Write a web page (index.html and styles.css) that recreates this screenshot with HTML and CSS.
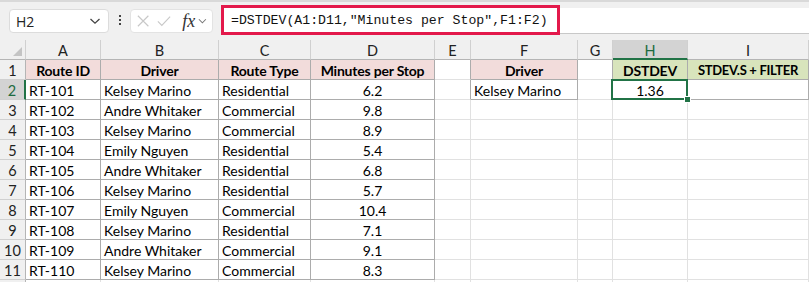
FILE: index.html
```html
<!DOCTYPE html>
<html lang="en">
<head>
  <meta charset="UTF-8">
  <title>DSTDEV</title>
  <link rel="stylesheet" href="styles.css">
</head>
<body>
  <div class="toolbar">
    <div class="namebox">
      <span>H2</span>
      <svg class="chev" width="12" height="8" viewBox="0 0 12 8"><path d="M1.5 2 L6 6.2 L10.5 2" fill="none" stroke="#444" stroke-width="1.3"/></svg>
    </div>
    <div class="dots"><i></i><i></i><i></i></div>
    <div class="fxbox">
      <svg width="14" height="14" viewBox="0 0 14 14"><path d="M1 1 L13 13 M13 1 L1 13" stroke="#c8c8c8" stroke-width="1.3"/></svg>
      <svg width="16" height="14" viewBox="0 0 16 14"><path d="M1 7.5 L5.5 12 L15 2" fill="none" stroke="#c8c8c8" stroke-width="1.3"/></svg>
      <span class="fx">fx</span>
      <svg width="10" height="8" viewBox="0 0 10 8"><path d="M1 2 L5 6 L9 2" fill="none" stroke="#777" stroke-width="1.2"/></svg>
    </div>
    <div class="formula-field">
      <span class="formula">=DSTDEV(A1:D11,"Minutes per Stop",F1:F2)</span>
    </div>
  </div>

  <div class="sheet">
    <div class="hd corner"><span class="tri"></span></div>
    <div class="hd">A</div><div class="hd">B</div><div class="hd">C</div><div class="hd">D</div>
    <div class="hd">E</div><div class="hd">F</div><div class="hd">G</div>
    <div class="hd active-col">H</div><div class="hd">I</div>

    <div class="rn">1</div>
    <div class="c t pink b ctr">Route ID</div>
    <div class="c t pink b ctr">Driver</div>
    <div class="c t pink b ctr">Route Type</div>
    <div class="c t pink b ctr">Minutes per Stop</div>
    <div class="c edge-r"></div>
    <div class="c t pink b ctr">Driver</div>
    <div class="c edge-r"></div>
    <div class="c t green b ctr">DSTDEV</div>
    <div class="c t green b ctr caps">STDEV.S + FILTER</div>

    <div class="rn active-row">2</div>
    <div class="c t">RT-101</div><div class="c t">Kelsey Marino</div><div class="c t">Residential</div><div class="c t ctr">6.2</div>
    <div class="c edge-r"></div>
    <div class="c t">Kelsey Marino</div>
    <div class="c edge-r"></div>
    <div class="c t ctr selected">1.36<span class="sel"><span class="handle"></span></span></div>
    <div class="c t"></div>

    <div class="rn">3</div>
    <div class="c t">RT-102</div><div class="c t">Andre Whitaker</div><div class="c t">Commercial</div><div class="c t ctr">9.8</div>
    <div class="c"></div><div class="c"></div><div class="c"></div><div class="c"></div><div class="c"></div>

    <div class="rn">4</div>
    <div class="c t">RT-103</div><div class="c t">Kelsey Marino</div><div class="c t">Commercial</div><div class="c t ctr">8.9</div>
    <div class="c"></div><div class="c"></div><div class="c"></div><div class="c"></div><div class="c"></div>

    <div class="rn">5</div>
    <div class="c t">RT-104</div><div class="c t">Emily Nguyen</div><div class="c t">Residential</div><div class="c t ctr">5.4</div>
    <div class="c"></div><div class="c"></div><div class="c"></div><div class="c"></div><div class="c"></div>

    <div class="rn">6</div>
    <div class="c t">RT-105</div><div class="c t">Andre Whitaker</div><div class="c t">Residential</div><div class="c t ctr">6.8</div>
    <div class="c"></div><div class="c"></div><div class="c"></div><div class="c"></div><div class="c"></div>

    <div class="rn">7</div>
    <div class="c t">RT-106</div><div class="c t">Kelsey Marino</div><div class="c t">Residential</div><div class="c t ctr">5.7</div>
    <div class="c"></div><div class="c"></div><div class="c"></div><div class="c"></div><div class="c"></div>

    <div class="rn">8</div>
    <div class="c t">RT-107</div><div class="c t">Emily Nguyen</div><div class="c t">Commercial</div><div class="c t ctr">10.4</div>
    <div class="c"></div><div class="c"></div><div class="c"></div><div class="c"></div><div class="c"></div>

    <div class="rn">9</div>
    <div class="c t">RT-108</div><div class="c t">Kelsey Marino</div><div class="c t">Residential</div><div class="c t ctr">7.1</div>
    <div class="c"></div><div class="c"></div><div class="c"></div><div class="c"></div><div class="c"></div>

    <div class="rn">10</div>
    <div class="c t">RT-109</div><div class="c t">Andre Whitaker</div><div class="c t">Commercial</div><div class="c t ctr">9.1</div>
    <div class="c"></div><div class="c"></div><div class="c"></div><div class="c"></div><div class="c"></div>

    <div class="rn">11</div>
    <div class="c t">RT-110</div><div class="c t">Kelsey Marino</div><div class="c t">Commercial</div><div class="c t ctr">8.3</div>
    <div class="c"></div><div class="c"></div><div class="c"></div><div class="c"></div><div class="c"></div>

    <div class="rn"></div>
    <div class="c"></div><div class="c"></div><div class="c"></div><div class="c"></div>
    <div class="c"></div><div class="c"></div><div class="c"></div><div class="c"></div><div class="c"></div>
  </div>
</body>
</html>
```

FILE: styles.css
```css
body {
  margin: 0;
  width: 809px;
  height: 282px;
  overflow: hidden;
  background: #fff;
  font-family: 'Lato', 'Carlito', sans-serif;
  color: #000;
}

/* formula bar */
.toolbar {
  display: flex;
  align-items: flex-start;
  height: 40px;
  box-sizing: border-box;
  background: #f0f0f0;
  border-top: 2px solid #d9d9d9;
}
.namebox {
  display: flex;
  align-items: center;
  justify-content: space-between;
  box-sizing: border-box;
  width: 100px;
  height: 24px;
  margin: 7px 0 0 9px;
  padding: 0 7px 0 6px;
  background: #fff;
  border: 1px solid #dcdcdc;
  border-radius: 4px;
  font-family: 'Open Sans', sans-serif;
  font-size: 14px;
  color: #222;
}
.dots {
  display: flex;
  flex-direction: column;
  gap: 2px;
  margin: 13px 0 0 10px;
}
.dots i {
  width: 2px;
  height: 2px;
  background: #444;
}
.fxbox {
  display: flex;
  align-items: center;
  gap: 8px;
  box-sizing: border-box;
  width: 83px;
  height: 24px;
  margin: 7px 0 0 9px;
  padding: 0 5px 0 6px;
  background: #fff;
  border: 1px solid #e3e3e3;
  border-radius: 4px;
}
.fxbox .fx {
  font-family: 'Liberation Serif', serif;
  font-style: italic;
  font-size: 18px;
  color: #333;
  margin-left: 3px;
  margin-right: -5px;
}
.formula-field {
  flex: 1;
  height: 26px;
  box-sizing: border-box;
  margin: 6px 0 0 8px;
  background: #fff;
  border-bottom: 1px solid #c8c8c8;
}
.formula {
  display: inline-block;
  box-sizing: border-box;
  width: 339px;
  height: 30px;
  margin-top: -4px;
  padding: 5px 0 0 7px;
  border: 3px solid #e3194b;
  font-family: 'Liberation Mono', monospace;
  font-size: 13.2px;
  color: #111;
}

/* grid */
.sheet {
  display: grid;
  grid-template-columns: 26px 75px 118px 92px 124px 36px 107px 35px 75px 121px;
  grid-auto-rows: 20px;
  font-size: 14px;
}
.hd, .rn, .c {
  box-sizing: border-box;
  line-height: 21px;
  white-space: nowrap;
  overflow: hidden;
}
.hd {
  text-align: center;
  background: #f0f0f0;
  border-right: 1px solid #d0d0d0;
  border-bottom: 1px solid #b5b5b5;
  color: #222;
  font-size: 14.5px;
}
.hd.corner {
  position: relative;
}
.tri {
  position: absolute;
  right: 3px;
  bottom: 3px;
  width: 0;
  height: 0;
  border-left: 9px solid transparent;
  border-bottom: 9px solid #c4c4c4;
}
.hd.active-col {
  background: #d3d3d3;
  color: #1e6b41;
  border-bottom: 2px solid #217346;
}
.rn {
  text-align: center;
  background: #f0f0f0;
  border-right: 1px solid #b5b5b5;
  border-bottom: 1px solid #d0d0d0;
  color: #222;
  font-size: 14.5px;
}
.rn.active-row {
  background: #d3d3d3;
  color: #1e6b41;
  border-right: 2px solid #217346;
}
.c {
  padding: 0 3px;
  border-right: 1px solid #e1e1e1;
  border-bottom: 1px solid #e1e1e1;
}
.c.t {
  border-right-color: #acacac;
  border-bottom-color: #acacac;
}
.c.edge-r {
  border-right-color: #acacac;
}
.ctr { text-align: center; }
.b {
  font-weight: bold;
  letter-spacing: -0.2px;
}
.caps {
  font-size: 13px;
  letter-spacing: -0.3px;
}
.pink { background: #f2dcdb; }
.green { background: #d8e4bc; }

/* active cell */
.selected {
  position: relative;
  overflow: visible;
}
.sel {
  position: absolute;
  top: -1px;
  left: -2px;
  right: -1px;
  bottom: -1px;
  border: 2px solid #217346;
}
.handle {
  position: absolute;
  right: -5px;
  bottom: -5px;
  width: 5px;
  height: 5px;
  background: #217346;
  border: 1px solid #fff;
}
```
